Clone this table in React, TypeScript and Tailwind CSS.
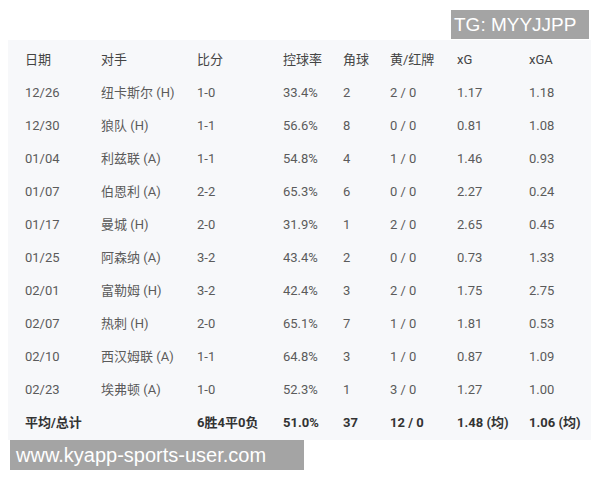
import React from "react";

const rows: string[][] = [
  ["12/26", "纽卡斯尔 (H)", "1-0", "33.4%", "2", "2 / 0", "1.17", "1.18"],
  ["12/30", "狼队 (H)", "1-1", "56.6%", "8", "0 / 0", "0.81", "1.08"],
  ["01/04", "利兹联 (A)", "1-1", "54.8%", "4", "1 / 0", "1.46", "0.93"],
  ["01/07", "伯恩利 (A)", "2-2", "65.3%", "6", "0 / 0", "2.27", "0.24"],
  ["01/17", "曼城 (H)", "2-0", "31.9%", "1", "2 / 0", "2.65", "0.45"],
  ["01/25", "阿森纳 (A)", "3-2", "43.4%", "2", "0 / 0", "0.73", "1.33"],
  ["02/01", "富勒姆 (H)", "3-2", "42.4%", "3", "2 / 0", "1.75", "2.75"],
  ["02/07", "热刺 (H)", "2-0", "65.1%", "7", "1 / 0", "1.81", "0.53"],
  ["02/10", "西汉姆联 (A)", "1-1", "64.8%", "3", "1 / 0", "0.87", "1.09"],
  ["02/23", "埃弗顿 (A)", "1-0", "52.3%", "1", "3 / 0", "1.27", "1.00"],
];

const header = ["日期", "对手", "比分", "控球率", "角球", "黄/红牌", "xG", "xGA"];
const total = ["平均/总计", "", "6胜4平0负", "51.0%", "37", "12 / 0", "1.48 (均)", "1.06 (均)"];

const grid = "grid grid-cols-[76px_96px_86px_60px_47px_67px_72px_1fr] h-[33px] items-center";
const font = { fontFamily: "Roboto, 'Noto Sans CJK SC', sans-serif" };

export default function App() {
  return (
    <div className="w-[600px] h-[480px] bg-white overflow-hidden" style={font}>
      <div className="flex justify-end pt-[10px] pr-[11px]">
        <div
          className="w-[138px] h-[29px] bg-[#a4a4a4] text-white text-[19px] leading-[29px] pl-[3px]"
          style={{ fontFamily: "'Liberation Sans', Arial, sans-serif" }}
        >
          TG: MYYJJPP
        </div>
      </div>
      <div className="ml-[8px] mt-[1px] w-[583px] h-[400px] bg-[#f7f8fa] pt-[3px] pl-[17px] text-[13px]">
        <div className={`${grid} text-[#444]`}>
          {header.map((h, i) => (
            <div key={i}>{h}</div>
          ))}
        </div>
        {rows.map((r, ri) => (
          <div key={ri} className={`${grid} text-[#5b5b5b]`}>
            {r.map((c, ci) => (
              <div key={ci} className="whitespace-nowrap">{c}</div>
            ))}
          </div>
        ))}
        <div className={`${grid} text-[#333] font-bold`}>
          {total.map((c, ci) => (
            <div key={ci} className="whitespace-nowrap">{c}</div>
          ))}
        </div>
      </div>
      <div
        className="ml-[10px] w-[294px] h-[30px] bg-[#a4a4a4] text-white text-[20px] leading-[30px] pl-[6px] whitespace-nowrap"
        style={{ fontFamily: "'Liberation Sans', Arial, sans-serif" }}
      >
        www.kyapp-sports-user.com
      </div>
    </div>
  );
}
